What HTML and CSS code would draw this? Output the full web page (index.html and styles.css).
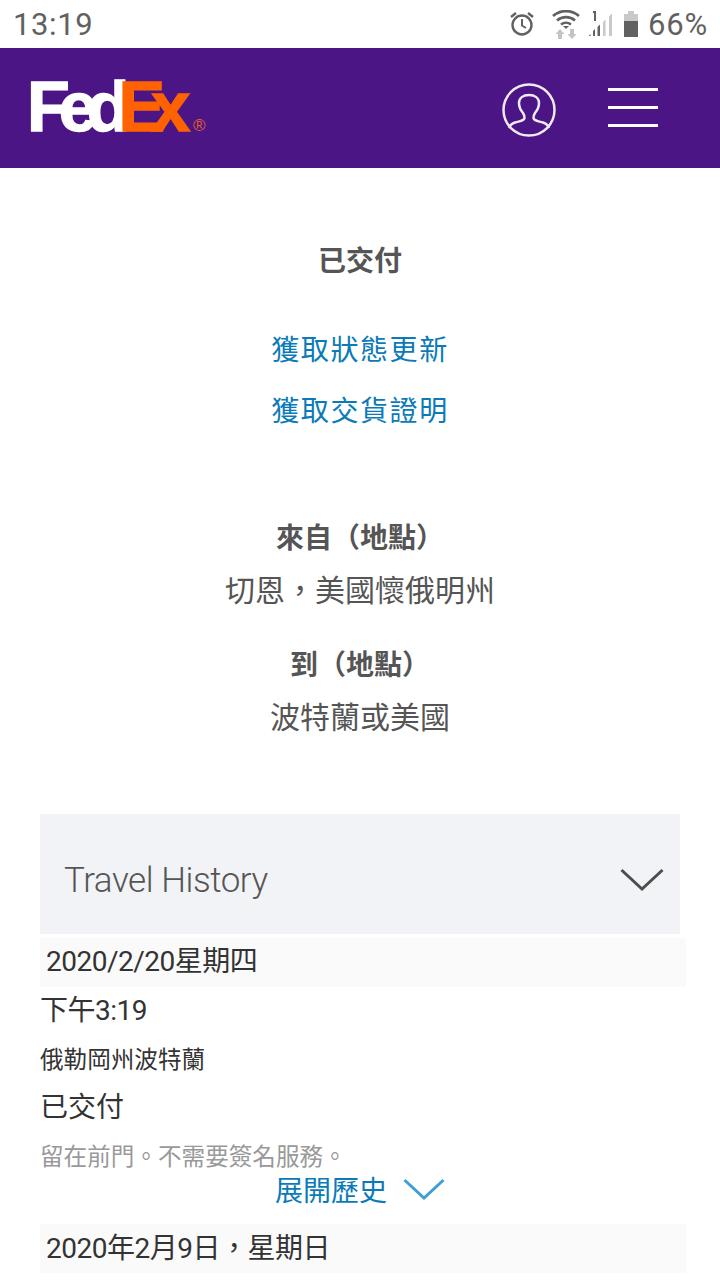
FILE: index.html
```html
<!DOCTYPE html>
<html lang="zh-Hant">
<head>
<meta charset="utf-8">
<title>FedEx</title>
<link rel="stylesheet" href="styles.css">
</head>
<body>
<div class="status">
  <span class="time">13:19</span>
  <div class="status-icons">
    <svg class="ic-alarm" width="28" height="28" viewBox="0 0 28 28" fill="none" stroke="#616161" stroke-width="2.4"><circle cx="14" cy="15" r="9.5"/><path d="M14 9v6.5l4 2.5" stroke-width="2"/><path d="M3 7l5-4M25 7l-5-4" stroke-width="2.4"/></svg>
    <svg class="ic-wifi" width="28" height="30" viewBox="0 0 28 30" fill="none"><path d="M1 6C8-.5 20-.5 27 6" stroke="#616161" stroke-width="2.6"/><path d="M5 10.500C10 6 18 6 23 10.500" stroke="#616161" stroke-width="2.600"/><path d="M9 14.500c3-2.500 7-2.500 10 0" stroke="#616161" stroke-width="2.400"/><path d="M14 19l-3-3h6z" fill="#616161"/><path d="M8 19l-4.500 5H6v5h4v-5h2.500z" fill="#c4c4c4"/><path d="M20 29l4.500-5H22v-5h-4v5h-2.500z" fill="#c4c4c4"/></svg>
    <svg class="ic-signal" width="26" height="28" viewBox="0 0 26 28"><path d="M5 1h3v10H6V3H5z" fill="#616161"/><path d="M1 26h1.500v-2L1 25.500zM5 26h2v-7l-2 2zM9.500 26h2.500V14.500l-2.500 2.500z" fill="#616161"/><path d="M15 26h2.500V9.500L15 12zM21 26h3V3.500l-3 3z" fill="#c9c9c9"/></svg>
    <svg class="ic-batt" width="16" height="28" viewBox="0 0 16 28"><path d="M5 1h6v3h4v23H1V4h4z" fill="#c9c9c9"/><path d="M1 11h14v16H1z" fill="#616161"/></svg>
    <span class="pct">66%</span>
  </div>
</div>

<header class="topbar">
  <div class="logo"><span class="fed">Fed</span><span class="ex">Ex</span><span class="reg">®</span></div>
  <div class="top-actions">
    <svg class="ic-user" width="56" height="56" viewBox="0 0 56 56" fill="none" stroke="#efe9f3" stroke-width="2.500"><circle cx="28" cy="28" r="25.500"/><path d="M8 46c1-3 3-4.500 6-5.500 5-1.500 9-1.500 9.500-4.500 0-2-.5-3.500-1.500-5-2.500-3-4-6-4-10 0-5 4-8 10-8s10 3 10 8c0 4-1.500 7-4 10-1 1.500-1.500 3-1.500 5 .5 3 4.500 3 9.500 4.500 3 1 5 2.500 6 5.500"/></svg>
    <div class="burger"><span></span><span></span><span></span></div>
  </div>
</header>

<main>
  <section class="summary">
    <h2 class="state">已交付</h2>
    <a class="link first">獲取狀態更新</a>
    <a class="link second">獲取交貨證明</a>
    <h3 class="label from">來自（地點）</h3>
    <p class="place">切恩，美國懷俄明州</p>
    <h3 class="label to">到（地點）</h3>
    <p class="place">波特蘭或美國</p>
  </section>

  <div class="accordion">
    <span>Travel History</span>
    <svg width="44" height="24" viewBox="0 0 44 24" fill="none" stroke="#4d4d4d" stroke-width="3"><path d="M1.500 2L22 21 42.500 2"/></svg>
  </div>

  <div class="date-row first-date">2020/2/20星期四</div>
  <div class="entry">
    <div class="e-time">下午3:19</div>
    <div class="e-place">俄勒岡州波特蘭</div>
    <div class="e-state">已交付</div>
    <div class="e-note">留在前門。不需要簽名服務。</div>
  </div>
  <a class="expand">展開歷史<svg width="42" height="22" viewBox="0 0 42 22" fill="none" stroke="#3f9fd4" stroke-width="3"><path d="M1.500 2L21 20 40.500 2"/></svg></a>
  <div class="date-row last-date">2020年2月9日，星期日</div>
</main>
</body>
</html>
```

FILE: styles.css
```css
* { box-sizing: border-box; }
html, body { margin: 0; padding: 0; }
body {
  width: 720px;
  height: 1280px;
  overflow: hidden;
  background: #fff;
  font-family: "Noto Sans CJK TC", Roboto, "Liberation Sans", sans-serif;
  color: #333;
}
.status {
  height: 48px;
  display: flex;
  align-items: center;
  justify-content: space-between;
  padding: 0 12px 0 13px;
  color: #616161;
  font-family: Roboto, sans-serif;
}
.time { font-size: 31px; letter-spacing: 0.6px; }
.status-icons { display: flex; align-items: center; }
.ic-alarm { margin-right: 16px; }
.ic-wifi { margin-right: 8px; margin-top: 2px; }
.ic-signal { margin-right: 9px; }
.ic-batt { margin-right: 9px; }
.pct { font-size: 31px; letter-spacing: 0.8px; }

.topbar {
  height: 120px;
  background: #4c1586;
  display: flex;
  align-items: center;
  justify-content: space-between;
  padding: 0 62px 0 27px;
}
.logo {
  font-family: "Liberation Sans", Arial, sans-serif;
  font-weight: 700;
  font-size: 70px;
  line-height: 70px;
  letter-spacing: -11px;
  display: flex;
  align-items: baseline;
  margin-top: 16px;
  -webkit-text-stroke: 1.5px currentColor;
}
.fed { color: #fff; }
.ex { color: #ff6200; letter-spacing: -14px; }
.reg {
  color: #e0602a;
  font-size: 17px;
  letter-spacing: 0;
  font-weight: 400;
  margin-left: 17px;
  -webkit-text-stroke: 0;
}
.top-actions { display: flex; align-items: center; gap: 51px; }
.ic-user { margin-top: 4px; }
.burger {
  width: 50px;
  display: flex;
  flex-direction: column;
  gap: 15px;
  margin-top: -1px;
}
.burger span { height: 3px; background: #fff; }

.summary { text-align: center; color: #555; }
.state {
  margin: 0;
  padding-top: 72px;
  font-size: 28px;
  line-height: 38px;
  font-weight: 700;
}
.link {
  display: block;
  color: #0a7ab8;
  font-size: 28px;
  line-height: 40px;
  letter-spacing: 1.600px;
}
.link.first { margin-top: 50px; }
.link.second { margin-top: 21px; }
.label {
  margin: 0;
  font-size: 28px;
  line-height: 38px;
  font-weight: 700;
}
.label.from { margin-top: 88px; }
.label.to { margin-top: 36px; }
.place {
  margin: 13px 0 0;
  font-size: 30px;
  line-height: 40px;
}

.accordion {
  margin: 79px 40px 0;
  height: 120px;
  background: #f2f3f7;
  display: flex;
  align-items: center;
  justify-content: space-between;
  padding: 12px 16px 0 24px;
  color: #555;
  font-family: Roboto, sans-serif;
  font-weight: 300;
  font-size: 35px;
  letter-spacing: -0.45px;
}
.date-row {
  margin: 0 34px 0 40px;
  height: 49px;
  background: #fafafa;
  padding-left: 6px;
  font-size: 28px;
  line-height: 47px;
  letter-spacing: -0.5px;
  color: #333;
  font-family: Roboto, "Noto Sans CJK TC", sans-serif;
}
.first-date { margin-top: 4px; }
.entry { margin-left: 40px; }
.e-time {
  margin-top: 4px;
  font-size: 28px;
  line-height: 40px;
  letter-spacing: -0.5px;
  font-family: Roboto, "Noto Sans CJK TC", sans-serif;
}
.e-place { margin-top: 10px; font-size: 23.600px; line-height: 34px; }
.e-state { margin-top: 10px; font-size: 28px; line-height: 40px; }
.e-note { margin-top: 12px; font-size: 23.600px; line-height: 36px; color: #999; }
.expand {
  display: flex;
  align-items: center;
  justify-content: center;
  gap: 16px;
  height: 40px;
  margin-top: -4px;
  color: #0a7ab8;
  font-size: 28px;
  line-height: 40px;
}
.last-date { margin-top: 15px; line-height: 49px; }
```
